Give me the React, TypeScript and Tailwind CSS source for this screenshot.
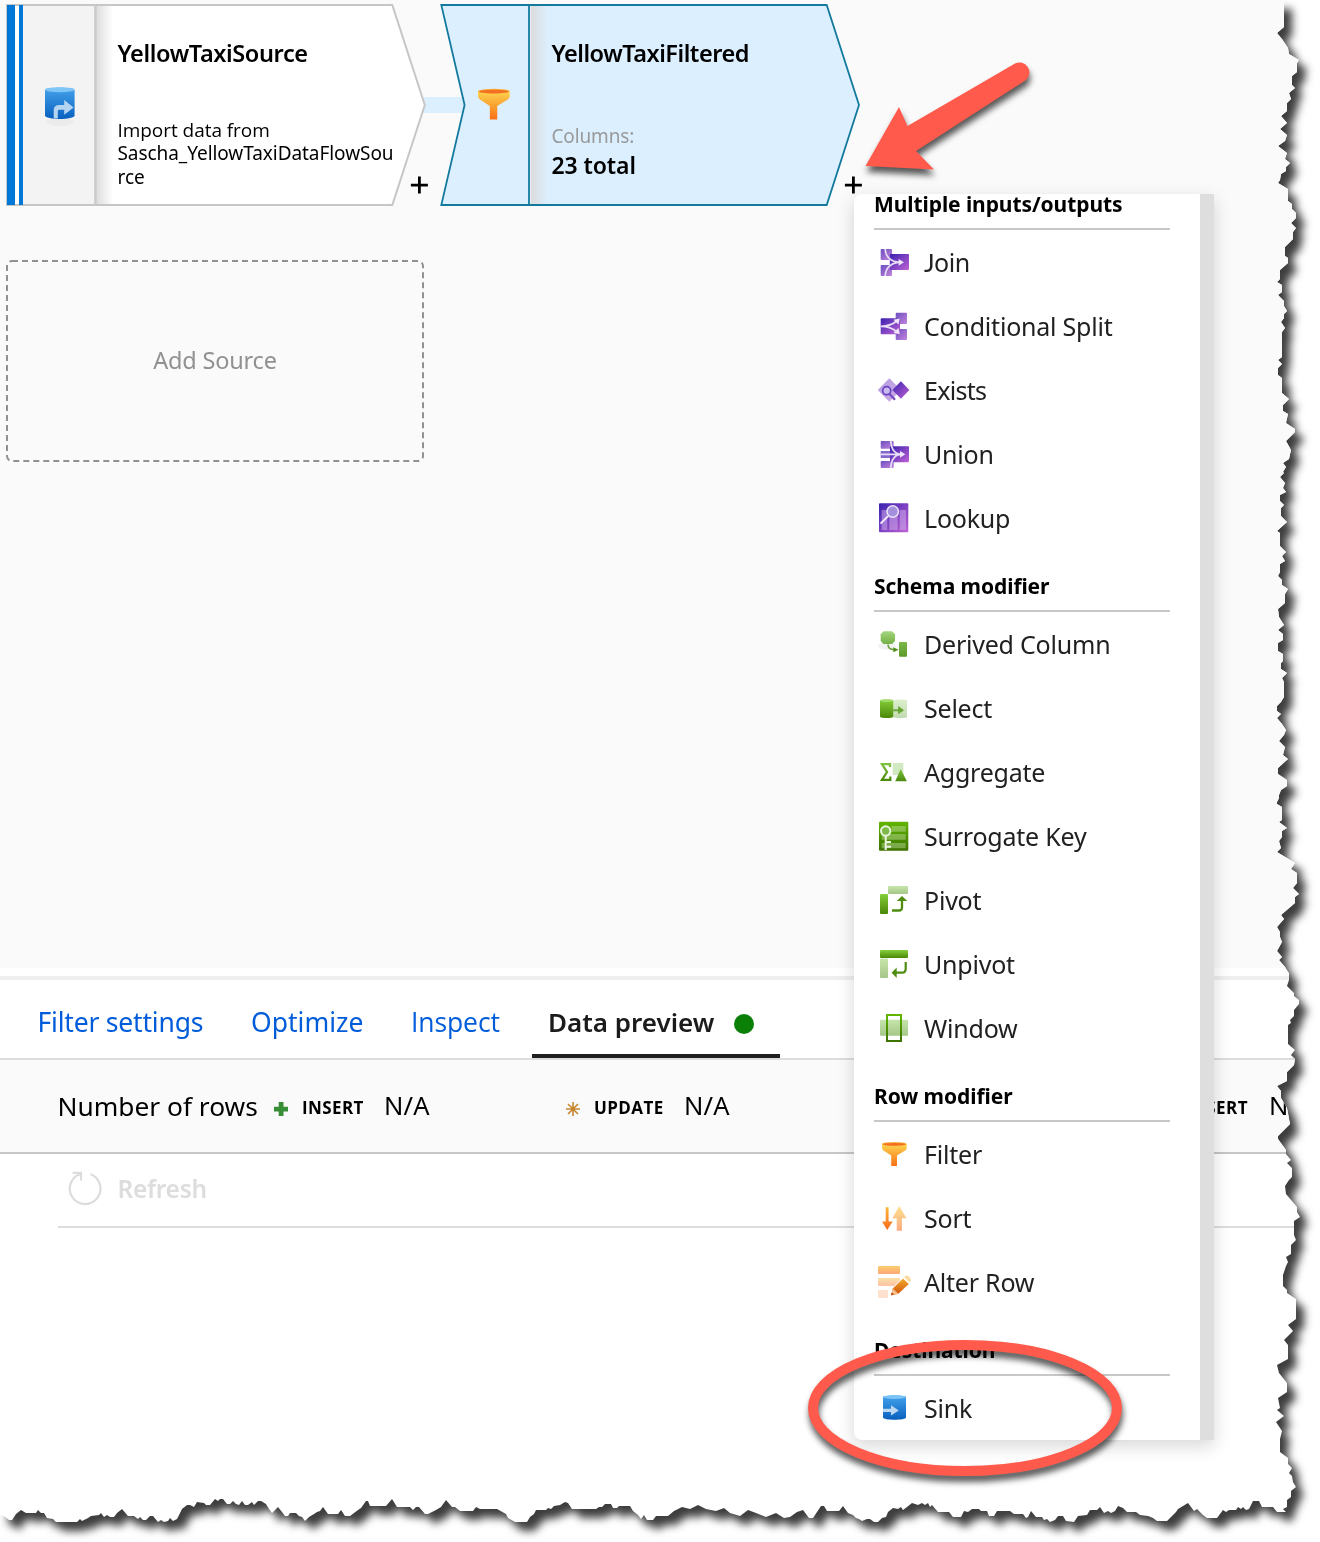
import React from "react";

/* Torn-paper outline of the sheet: right edge going down, bottom edge going right. */
const RIGHT_EDGE =
  "1284,0 1284,27 1277,33 1282,39 1288,48 1289,54 1299,60 1297,63 1297,72 1292,76 1292,85 1295,88 1289,93 1291,99 1287,103 1287,111 1281,116 1287,123 1280,129 1287,135 1285,141 1278,146 1287,153 1285,159 1290,163 1286,167 1286,171 1281,174 1280,180 1278,183 1288,189 1288,201 1292,204 1292,209 1296,213 1296,218 1291,223 1296,228 1293,232 1293,239 1285,247 1285,256 1288,258 1288,263 1280,270 1280,279 1277,282 1282,285 1282,292 1278,295 1284,301 1284,306 1287,311 1284,314 1284,318 1281,322 1285,328 1282,332 1282,357 1278,360 1282,364 1278,368 1278,375 1282,378 1282,393 1289,399 1283,405 1283,411 1288,414 1286,423 1295,429 1295,432 1286,441 1291,450 1289,459 1283,463 1286,467 1283,472 1284,473 1280,477 1285,483 1283,488 1286,492 1280,495 1280,501 1284,505 1281,508 1281,516 1287,522 1277,531 1280,533 1280,546 1286,552 1282,556 1285,561 1280,564 1280,572 1278,576 1282,580 1282,585 1288,589 1285,594 1285,603 1278,609 1279,617 1284,625 1278,630 1283,634 1283,640 1278,643 1278,651 1283,654 1283,661 1281,663 1281,669 1287,673 1282,678 1284,682 1284,697 1281,702 1277,706 1277,711 1281,714 1277,718 1282,724 1286,730 1284,735 1279,741 1285,747 1283,755 1288,759 1278,768 1278,774 1287,780 1287,786 1281,790 1279,795 1279,798 1277,802 1277,804 1282,807 1282,820 1279,822 1287,828 1282,831 1282,837 1279,841 1281,848 1277,852 1295,863 1291,869 1297,873 1297,883 1293,888 1299,894 1295,897 1295,903 1288,909 1281,915 1284,919 1277,927 1280,932 1280,937 1282,942 1277,951 1282,957 1279,960 1285,967 1289,973 1289,980 1287,986 1294,993 1294,996 1299,1000 1299,1004 1294,1010 1294,1016 1290,1020 1291,1023 1288,1025 1288,1044 1295,1050 1291,1055 1295,1059 1294,1065 1287,1072 1287,1081 1277,1086 1281,1091 1281,1098 1287,1108 1290,1124 1278,1136 1278,1139 1286,1150 1286,1154 1291,1160 1287,1163 1292,1168 1292,1177 1289,1180 1285,1186 1286,1194 1297,1207 1297,1212 1300,1217 1294,1221 1294,1235 1296,1240 1291,1245 1291,1254 1286,1257 1288,1262 1286,1266 1283,1275 1283,1286 1287,1290 1287,1293 1296,1299 1296,1319 1288,1325 1293,1331 1284,1340 1288,1345 1288,1359 1277,1365 1279,1373 1287,1383 1287,1392 1278,1398 1280,1408 1277,1410 1284,1416 1276,1422 1282,1431 1280,1439 1280,1452 1288,1458 1288,1464 1292,1468 1289,1473 1292,1476 1293,1482 1296,1487 1291,1491 1291,1497 1287,1500 1287,1507 1283,1509 1286,1512";
const BOTTOM_EDGE =
  "0,1515 4,1516 9,1520 12,1520 16,1514 21,1510 26,1513 36,1513 38,1510 41,1513 44,1513 47,1518 53,1519 56,1522 77,1522 80,1519 82,1521 88,1518 91,1516 99,1515 101,1513 104,1517 107,1515 110,1517 114,1517 117,1513 122,1509 128,1516 134,1516 138,1519 140,1517 143,1520 146,1520 150,1516 153,1516 158,1522 161,1520 164,1522 168,1521 170,1518 173,1521 177,1519 182,1509 187,1505 190,1505 194,1507 197,1502 204,1503 206,1505 210,1505 215,1499 218,1501 220,1499 223,1499 227,1504 230,1504 233,1501 236,1504 239,1505 242,1501 245,1505 248,1505 252,1502 254,1505 258,1501 261,1501 266,1504 269,1509 272,1513 278,1507 282,1512 285,1516 288,1516 290,1513 296,1513 299,1516 302,1517 305,1521 309,1517 314,1514 317,1512 320,1511 323,1507 328,1514 338,1514 341,1510 345,1516 350,1516 354,1513 358,1510 361,1508 366,1501 368,1501 370,1506 386,1506 392,1499 397,1507 410,1507 413,1510 416,1507 419,1507 425,1514 428,1514 432,1512 436,1510 441,1507 446,1500 452,1507 455,1507 460,1511 473,1511 476,1507 480,1509 497,1509 506,1514 508,1518 515,1522 527,1522 530,1517 534,1514 536,1510 546,1510 548,1508 551,1509 554,1506 560,1505 565,1502 568,1503 572,1509 596,1509 599,1507 602,1507 605,1504 611,1504 613,1508 617,1508 619,1506 630,1506 633,1511 638,1515 641,1519 644,1515 647,1520 653,1520 656,1516 668,1516 674,1511 682,1507 690,1509 698,1505 706,1509 716,1511 724,1508 730,1513 740,1516 748,1510 756,1513 766,1517 776,1513 784,1518 790,1517 797,1512 803,1510 809,1518 813,1518 817,1512 821,1506 824,1506 827,1511 839,1511 843,1506 848,1513 853,1515 856,1518 859,1519 862,1521 867,1519 870,1519 874,1522 878,1522 882,1518 886,1517 888,1512 893,1508 898,1509 901,1507 903,1510 907,1507 912,1503 918,1505 922,1503 925,1505 928,1503 930,1507 932,1505 938,1512 949,1512 953,1517 961,1517 964,1511 968,1512 972,1509 979,1509 981,1511 987,1511 989,1516 994,1516 997,1511 1010,1511 1014,1514 1023,1514 1026,1518 1028,1517 1031,1511 1036,1517 1042,1517 1044,1520 1047,1519 1050,1522 1055,1520 1058,1516 1063,1516 1066,1521 1074,1522 1078,1516 1087,1515 1090,1510 1097,1510 1100,1507 1104,1513 1108,1511 1111,1513 1115,1511 1118,1506 1123,1508 1127,1512 1136,1512 1140,1515 1148,1516 1153,1518 1157,1521 1167,1521 1170,1518 1176,1512 1178,1509 1188,1503 1194,1511 1197,1509 1203,1515 1207,1518 1217,1518 1223,1510 1226,1512 1229,1510 1236,1510 1238,1507 1241,1509 1243,1507 1246,1510 1249,1509 1253,1501 1259,1501 1262,1507 1273,1507 1277,1512";

const toPoints = (s: string) => s.split(" ").map((p) => p.split(",").map((n) => n + "px").join(" "));
const SHEET_CLIP =
  "polygon(" + ["0px 0px", ...toPoints(RIGHT_EDGE), ...toPoints(BOTTOM_EDGE).reverse()].join(",") + ")";

function Defs() {
  const g = (id: string, a: string, b: string, diagonal = false) => (
    <linearGradient id={id} x1="0" y1="0" x2={diagonal ? "1" : "0"} y2="1">
      <stop offset="0" stopColor={a} />
      <stop offset="1" stopColor={b} />
    </linearGradient>
  );
  return (
    <svg width="0" height="0" className="absolute">
      <defs>
        {g("pDark", "#3a22b0", "#c062d4", true)}
        {g("pMid", "#6a4fc0", "#c584dc", true)}
        {g("pLight", "#b3a0de", "#cfa9e6", true)}
        {g("gDark", "#86cf3a", "#4a8707")}
        {g("gLight", "#c6e5ab", "#a5c787")}
        {g("gPale", "#dcefcd", "#c2dab0")}
        {g("gOct", "#a4d57c", "#74b045")}
        {g("gRect", "#7cb84a", "#5d9a2b")}
        {g("gSq", "#62b500", "#3c7300")}
        {g("gTri", "#7fc243", "#4a8a0c")}
        {g("oFunnel", "#fcd44f", "#fa7014")}
        {g("oDown", "#fbb73c", "#f9691c")}
        {g("oUp", "#fde08c", "#fcab84")}
        {g("oBar", "#fbcd6e", "#fda878")}
        {g("oBar2", "#fde0a6", "#fdc3a4")}
        {g("oPen", "#f2ab2e", "#d14f06")}
        {g("blue", "#45a3ec", "#0860be")}
      </defs>
    </svg>
  );
}

function Icon({ children }: { children: React.ReactNode }) {
  return (
    <svg width="34" height="32" viewBox="0 0 34 32" className="shrink-0 overflow-visible">
      {children}
    </svg>
  );
}

function Funnel() {
  return (
    <>
      <path d="M4 6V9.7C4 11 5 12.2 6.6 13.3L13.2 17.6V28H19V17.6L26 13.3C27.8 12.2 28.7 11 28.7 9.7V6Z" fill="url(#oFunnel)" />
      <ellipse cx="16.35" cy="6" rx="12.35" ry="2" fill="#fbb040" />
      <ellipse cx="16.35" cy="6.3" rx="11.4" ry="1.4" fill="#f37021" />
    </>
  );
}

const icons: Record<string, React.ReactNode> = {
  Join: (
    <>
      <rect x="2.7" y="3" width="11.3" height="11" rx="1" fill="url(#pMid)" />
      <rect x="2.7" y="19" width="11.3" height="11" rx="1" fill="url(#pMid)" />
      <rect x="11.8" y="8" width="19.2" height="16" rx="1" fill="url(#pDark)" />
      <path d="M7.2 3C7.6 10.5 12.5 16.3 22 16.3M7.2 30C7.6 22.5 12.5 16.3 22 16.3" fill="none" stroke="#e6dcf6" strokeWidth="1.7" />
      <path d="M20.6 12.9L26 16.3L20.6 19.7Z" fill="#efe6fa" />
    </>
  ),
  "Conditional Split": (
    <>
      <rect x="17.7" y="2.7" width="11.3" height="11.3" rx="1" fill="url(#pMid)" />
      <rect x="17.7" y="19" width="11.3" height="11" rx="1" fill="url(#pMid)" />
      <rect x="2.7" y="8.3" width="19.3" height="16" rx="1" fill="url(#pDark)" />
      <path d="M2.7 16.3C9 16.3 14 15 18.5 11.3M2.7 16.3C9 16.3 14 17.8 18.5 21.5" fill="none" stroke="#e6dcf6" strokeWidth="1.8" />
      <path d="M15.4 9.8L21.8 8.6L20.4 14.6ZM15.4 22.9L21.8 24L20.4 18Z" fill="#efe6fa" />
    </>
  ),
  Exists: (
    <>
      <path d="M11.3 4.3L23 16L11.3 27.7L-0.3 16Z" fill="url(#pLight)" />
      <path d="M22.9 7.2L31.4 16L22.9 24.8L14.4 16Z" fill="url(#pDark)" />
      <path d="M11.6 20L17 25.8" stroke="#7a4cc4" strokeWidth="2.4" />
      <circle cx="8.7" cy="16.7" r="4" fill="#c9bbec" stroke="#6a3fc0" strokeWidth="1.7" />
    </>
  ),
  Union: (
    <>
      <rect x="2.7" y="3" width="13" height="7.7" rx="1" fill="url(#pMid)" />
      <rect x="2.7" y="13" width="13" height="7" fill="#8468cc" />
      <rect x="2.7" y="23" width="13" height="7" rx="1" fill="url(#pMid)" />
      <rect x="12" y="8.3" width="19" height="16" rx="1" fill="url(#pDark)" />
      <path d="M12.8 3C13.2 10.5 16.5 16.3 24 16.3M12.8 30C13.2 22.5 16.5 16.3 24 16.3M2.7 16.3H24" fill="none" stroke="#e6dcf6" strokeWidth="1.7" />
      <path d="M22 12.9L27.4 16.3L22 19.7Z" fill="#efe6fa" />
    </>
  ),
  Lookup: (
    <>
      <rect x="1" y="1.3" width="29.3" height="29" rx="1" fill="url(#pDark)" />
      <path d="M3.7 8H9.3V28H3.7ZM11.3 8H19.7V28H11.3ZM21.7 8H28V28H21.7Z" fill="#d3b3ee" fillOpacity="0.5" />
      <path d="M10.3 14L2.5 21.6" stroke="#f1eafa" strokeWidth="2" />
      <circle cx="14.7" cy="9.5" r="5.7" fill="#a48fdd" stroke="#e9e0f8" strokeWidth="1.6" />
    </>
  ),
  "Derived Column": (
    <>
      <ellipse cx="9" cy="18" rx="9" ry="4" fill="#000" fillOpacity="0.05" />
      <path d="M5.5 3.3H14L17 6.2V13L14 16H5.5L2.7 13V6.2Z" fill="url(#gOct)" />
      <rect x="21" y="14" width="8" height="14.7" rx="0.8" fill="url(#gRect)" />
      <path d="M10 16.6C10 19.7 11.8 21.6 16 21.6" fill="none" stroke="#6aa33c" strokeWidth="1.6" />
      <path d="M15.3 19.2L20.6 21.7L15.3 24.2Z" fill="#4f8f17" />
    </>
  ),
  Select: (
    <>
      <path d="M15.3 8.5C15.3 7 29 7 29 8.5V25C29 26.5 15.3 26.5 15.3 25Z" fill="url(#gPale)" />
      <path d="M2 8.5C2 7 15.3 7 15.3 8.5V24.6C15.3 26.6 2 26.6 2 24.6Z" fill="url(#gDark)" />
      <ellipse cx="8.65" cy="8.6" rx="6.65" ry="1.4" fill="#a5dd72" />
      <path d="M13 18.2H21" stroke="#6aa838" strokeWidth="2" />
      <path d="M20.2 14L26 18.2L20.2 22.3Z" fill="#64a432" />
    </>
  ),
  Aggregate: (
    <>
      <path d="M12 11V8.1H4L9 16L4 23.8H12.3V20.6" fill="none" stroke="url(#gTri)" strokeWidth="2.3" />
      <rect x="14.7" y="7" width="10.6" height="12" rx="0.8" fill="#d2e8c0" />
      <path d="M22.7 13L28.9 25.2H17.2Z" fill="url(#gTri)" />
    </>
  ),
  "Surrogate Key": (
    <>
      <rect x="1" y="1.7" width="29.3" height="29" rx="1" fill="url(#gSq)" />
      <path d="M13.5 6H27.7V11.7H13.5ZM3.7 14H27.7V19.7H3.7ZM3.7 23H27.7V28.3H3.7Z" fill="#c4e2a4" fillOpacity="0.45" />
      <path d="M7.7 15.5V30M7.7 22H13M7.7 26.7H13" stroke="#e8f4de" strokeWidth="2" fill="none" />
      <circle cx="7.7" cy="11" r="4.7" fill="#7dbb48" stroke="#e8f4de" strokeWidth="2" />
    </>
  ),
  Pivot: (
    <>
      <rect x="10" y="2" width="20" height="8" rx="1" fill="url(#gLight)" />
      <rect x="2" y="10" width="8" height="20" rx="1" fill="url(#gDark)" />
      <path d="M14 26.5H21C23 26.5 24 25.5 24 23.5V15.5" fill="none" stroke="#4f8c10" strokeWidth="2.3" />
      <path d="M18.8 17L24 12L29.3 17Z" fill="#4f8c10" />
    </>
  ),
  Unpivot: (
    <>
      <rect x="2" y="2" width="28" height="8" rx="1" fill="url(#gDark)" />
      <rect x="2" y="10.6" width="8" height="19.4" rx="1" fill="url(#gLight)" />
      <path d="M27.7 14V20.8C27.7 23.2 26.6 24.7 24.2 24.7H18" fill="none" stroke="#4f8c10" strokeWidth="2.2" />
      <path d="M18.7 19.4L13.6 24.7L18.7 30Z" fill="#4f8c10" />
    </>
  ),
  Window: (
    <>
      <rect x="2" y="7.7" width="28" height="16" rx="1" fill="url(#gLight)" />
      <rect x="9" y="3" width="14" height="26" fill="none" stroke="url(#gSq)" strokeWidth="2" />
    </>
  ),
  Filter: <Funnel />,
  Sort: (
    <>
      <path d="M7.7 5.3H10.6V19.6H14.7L9.2 28L4 19.6H7.7Z" fill="url(#oDown)" />
      <path d="M21.3 4L28.4 16.3H24V28.7H18.7V16.3H14.3Z" fill="url(#oUp)" />
    </>
  ),
  "Alter Row": (
    <>
      <rect x="0" y="0" width="22" height="8" rx="0.8" fill="url(#oBar)" />
      <rect x="0" y="12" width="22" height="8" rx="0.8" fill="url(#oBar2)" />
      <rect x="0" y="24" width="10" height="8" rx="0.8" fill="#fde0cd" />
      <path d="M12.4 30L14.3 22L25.5 10.8L32 17.3L20.8 28.2Z" fill="#fff" />
      <path d="M13 29.3L14.8 22.6L25 12.4L30.8 18L20.4 27.8Z" fill="url(#oPen)" />
      <path d="M14.8 22.6L20.4 27.8L13 29.3Z" fill="#fbc08c" />
      <path d="M13.8 26.4L16.2 28.6L13 29.3Z" fill="#b84300" />
      <path d="M26.2 11.2L28 9.6C29.6 8.6 33.6 12.2 32.8 14.4L31.6 16.6Z" fill="#fcd9a0" />
    </>
  ),
  Sink: (
    <>
      <path d="M5 5C5 3 28 3 28 5V25.4C28 28.4 5 28.4 5 25.4Z" fill="url(#blue)" />
      <ellipse cx="16.5" cy="5" rx="11.5" ry="1.9" fill="#7cc3f6" />
      <path d="M5 16.7H13V13.2L20.8 18.4L13 23.6V20H5Z" fill="#bcd8f2" />
    </>
  ),
};

const groups = [
  { title: "Multiple inputs/outputs", items: ["Join", "Conditional Split", "Exists", "Union", "Lookup"] },
  { title: "Schema modifier", items: ["Derived Column", "Select", "Aggregate", "Surrogate Key", "Pivot", "Unpivot", "Window"] },
  { title: "Row modifier", items: ["Filter", "Sort", "Alter Row"] },
  { title: "Destination", items: ["Sink"] },
];

function ItemLabel({ name }: { name: string }) {
  if (name === "Join")
    return (
      <span className="leading-8 tracking-[-0.5px]">
        <span className="font-['Lato']">J</span>oin
      </span>
    );
  if (name === "Exists") return <span className="leading-8 tracking-[-0.7px]">{name}</span>;
  return <span className="whitespace-nowrap leading-8">{name}</span>;
}

function TransformMenu() {
  return (
    <div className="absolute left-[854px] top-[194px] flex h-[1246px] w-[360px] rounded-l-lg bg-white shadow-[0_6px_18px_rgba(0,0,0,0.16)]">
      <div className="flex flex-1 flex-col justify-end overflow-hidden rounded-l-lg pl-5 pr-[30px]">
        {groups.map((group) => (
          <section key={group.title}>
            <h3 className="flex h-[62px] items-center border-b-2 border-[#c8c8c8] pt-[11px] text-[21px] font-bold leading-[30px] tracking-[-0.08px] text-black">
              {group.title}
            </h3>
            {group.items.map((name) => (
              <div key={name} className="flex h-16 items-center gap-3 pl-1 text-[25px] tracking-[-0.22px] text-[#212121]">
                <Icon>{icons[name]}</Icon>
                <ItemLabel name={name} />
              </div>
            ))}
          </section>
        ))}
      </div>
      <div className="w-[14px] bg-[#dedede]" />
    </div>
  );
}

function Plus() {
  return (
    <svg width="18" height="18" viewBox="0 0 18 18">
      <path d="M9.4 0.5V17.5M0.9 9.2H17.9" stroke="#000" strokeWidth="2.8" />
    </svg>
  );
}

function SourceNode() {
  return (
    <div className="relative ml-1.5 flex h-[202px] w-[420px]">
      <svg width="420" height="202" viewBox="6 4 420 202" className="absolute inset-0">
        <defs>
          <linearGradient id="fold" x1="0" x2="1" y1="0" y2="0">
            <stop offset="0" stopColor="#dcdcdc" />
            <stop offset="1" stopColor="#dcdcdc" stopOpacity="0" />
          </linearGradient>
        </defs>
        <path d="M7 5H392.3L424.8 105L392.3 205H7Z" fill="#fff" />
        <rect x="23" y="5" width="72" height="200" fill="#f3f3f3" />
        <rect x="96" y="6" width="17" height="198" fill="url(#fold)" />
        <path d="M7 5H392.3L424.8 105L392.3 205H7Z" fill="none" stroke="#c6c6c6" strokeWidth="2" />
        <path d="M95.4 5V205" stroke="#cacaca" strokeWidth="2.4" />
        <path d="M7 5H15V205H7ZM19 5H23V205H19Z" fill="#0078d7" />
        <ellipse cx="60" cy="122" rx="14" ry="4" fill="#000" fillOpacity="0.03" />
        <path d="M45 90C45 86.8 74.6 86.8 74.6 90V115.6C74.6 120.2 45 120.2 45 115.6Z" fill="url(#blue)" />
        <ellipse cx="59.8" cy="89.8" rx="14.8" ry="2.4" fill="#80c5f8" />
        <path d="M53.7 118.4V110.5C53.7 107 55.5 105.1 59 105.1H64.2V100L73.6 107.4L64.2 114.8V109.8H59.5C58.3 109.8 57.8 110.4 57.8 111.6V118.6Z" fill="#b4d4f1" />
      </svg>
      <div className="relative ml-[111.5px] w-[285px] text-black">
        <h2 className="mt-[33px] text-[23.5px] font-semibold leading-8 tracking-[-0.38px]">YellowTaxiSource</h2>
        <p className="mt-[50px] font-['Open_Sans'] text-[19px] leading-[23.4px] tracking-[-0.05px]">Import data from</p>
        <p className="text-[19px] leading-[23.4px] tracking-[-0.06px]">Sascha_YellowTaxiDataFlowSou<br />rce</p>
      </div>
    </div>
  );
}

function FilterNode() {
  return (
    <div className="relative ml-[14px] flex h-[202px] w-[420px]">
      <svg width="420" height="202" viewBox="440 4 420 202" className="absolute inset-0">
        <path d="M441.3 5H826.7L859 105L826.7 205H441.3L464.6 105Z" fill="#dcefff" />
        <rect x="531" y="6" width="17" height="198" fill="url(#fold)" />
        <path d="M441.3 5H826.7L859 105L826.7 205H441.3L464.6 105Z" fill="none" stroke="#137a9e" strokeWidth="1.8" />
        <path d="M529 5V205" stroke="#137a9e" strokeWidth="1.8" />
        <path d="M530.5 6V204" stroke="#e6eef4" strokeWidth="1" />
        <g transform="translate(472.9 83.5) scale(1.283)"><Funnel /></g>
      </svg>
      <div className="relative ml-[111.5px] text-black">
        <h2 className="mt-[33px] text-[23.5px] font-semibold leading-8 tracking-[-0.48px]">YellowTaxiFiltered</h2>
        <p className="mt-[53px] text-[19px] leading-7 tracking-[-0.15px] text-[#999]">Columns:</p>
        <p className="text-[23px] font-semibold leading-[30px] tracking-[-0.1px]">23 total</p>
      </div>
    </div>
  );
}

function Counter({ mark, label, width, labelWidth }: { mark: React.ReactNode; label: string; width: string; labelWidth: string }) {
  return (
    <div className={"flex shrink-0 items-center " + width}>
      <svg width="14" height="14" viewBox="0 0 14 14" className="mt-[5px] shrink-0">{mark}</svg>
      <span className={"ml-[14px] mt-[3px] shrink-0 font-['Open_Sans'] text-[17px] font-bold leading-6 tracking-[0.4px] " + labelWidth}>{label}</span>
      <span className="mt-[-3px] text-[25.5px] leading-8 tracking-[0.2px]">N/A</span>
    </div>
  );
}

function Annotations() {
  return (
    <svg width="1320" height="1542" viewBox="0 0 1320 1542" className="pointer-events-none absolute left-0 top-0 drop-shadow-[1px_6px_3px_rgba(0,0,0,0.65)]">
      <path d="M865.5 166L899 107L907.5 126L1015 63.5A10 10 0 0 1 1026 80L916 151L934 169.5Z" fill="#ff5a4b" />
      <ellipse cx="965" cy="1408" rx="152" ry="63" fill="none" stroke="#ff5a4b" strokeWidth="10" />
    </svg>
  );
}

export default function App() {
  return (
    <div className="relative h-[1542px] w-[1320px] overflow-hidden bg-white font-['Noto_Sans',sans-serif]">
      <Defs />
      <div className="drop-shadow-[8px_9px_4.5px_rgba(0,0,0,0.76)]">
        <div className="relative flex h-[1542px] w-[1320px] flex-col overflow-hidden bg-white" style={{ clipPath: SHEET_CLIP }}>
          <div className="h-[968px] bg-[#fafafa] pt-1">
            <div className="relative flex">
              <div className="absolute left-[420px] top-[93px] h-4 w-[48px] bg-[#dcefff]" />
              <SourceNode />
              <FilterNode />
              <div className="absolute left-[410px] top-[172px]"><Plus /></div>
              <div className="absolute left-[844px] top-[172px]"><Plus /></div>
            </div>
            <div className="relative ml-1.5 mt-[54px] flex h-[202px] w-[418px] items-center justify-center">
              <svg width="418" height="202" className="absolute inset-0">
                <rect x="1" y="1" width="416" height="200" rx="5" fill="none" stroke="#919191" strokeWidth="2" strokeDasharray="6 4" />
              </svg>
              <span className="relative -mt-0.5 text-[23.5px] leading-8 tracking-[-0.2px] text-[#919191]">Add Source</span>
            </div>
          </div>
          <div className="mt-2 h-1 bg-[#eeeeee]" />
          <div className="flex h-20 border-b-2 border-[#dddddd] pl-[37.5px] text-[26.5px] leading-[84px] text-[#015cda]">
            <span className="w-[213.5px] tracking-[-0.2px]">Filter settings</span>
            <span className="w-[160px]">Optimize</span>
            <span className="w-[121px] font-['Open_Sans'] tracking-[-0.1px]">Inspect</span>
            <div className="flex h-[78px] w-[248px] items-center border-b-4 border-[#1f1f1f] pl-4 text-[26px] font-semibold text-[#1b1b1b]">
              <span className="mt-[10px] leading-8">Data preview</span>
              <span className="ml-[20px] mt-[14px] size-5 rounded-full bg-[#0b8008]" />
            </div>
          </div>
          <div className="flex h-[94px] items-center border-b-2 border-[#c6c6c6] bg-[#fafafa] pl-[57.5px] text-black">
            <span className="w-[216.5px] shrink-0 whitespace-nowrap text-[26.3px] leading-8">Number of rows</span>
            <Counter width="w-[292px]" labelWidth="w-[82px]" label="INSERT" mark={<path d="M4.7 0H9.5V4.7H14V9.4H9.5V14H4.7V9.4H0V4.7H4.7Z" fill="#388e36" />} />
            <Counter
              width="w-[588px]"
              labelWidth="w-[90px]"
              label="UPDATE"
              mark={<path d="M7 0V14M0 7H14M2 2L12 12M12 2L2 12" stroke="#c5862f" strokeWidth="1.6" />}
            />
            <Counter width="w-[170px]" labelWidth="w-[87px]" label="UPSERT" mark={<path d="M0 7H14" stroke="#388e36" strokeWidth="3" />} />
          </div>
          <div className="ml-[58px] flex h-[74px] items-center border-b-2 border-[#dddddd] pl-[10px]">
            <svg width="34" height="36" viewBox="0 0 34 36" className="mt-[-4px]">
              <path d="M22.6 4.3A15.4 15.4 0 1 1 11.6 4.3M4.6 2.8H13V10.6" fill="none" stroke="#dcdcdc" strokeWidth="2.2" />
            </svg>
            <span className="ml-[15.5px] mt-[-2px] text-[24.5px] font-semibold leading-8 tracking-[-0.3px] text-[#dddddd]">Refresh</span>
          </div>
          <TransformMenu />
          <Annotations />
        </div>
      </div>
    </div>
  );
}
